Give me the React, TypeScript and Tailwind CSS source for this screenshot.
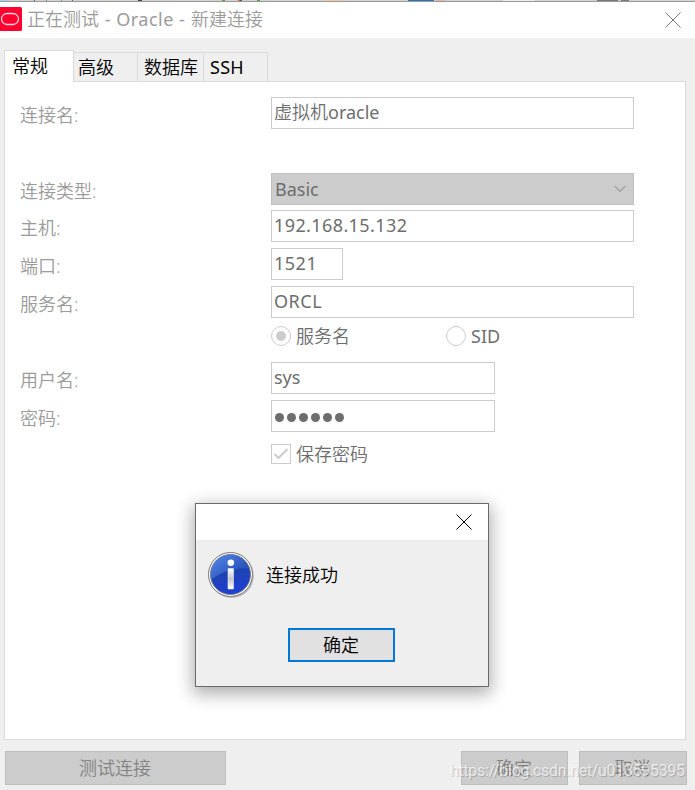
import React from 'react';
import clsx from 'clsx';

const tabs = [
  { name: '常规', width: 'w-[70px]', active: true },
  { name: '高级', width: 'w-[64px]' },
  { name: '数据库', width: 'w-[66px]' },
  { name: 'SSH', width: 'w-[64px]' },
];

// Sliver of the window behind, visible above the title bar
const backdrop = [
  { left: 0, width: 9, color: '#a9cde8' },
  { left: 34, width: 1, color: '#2f6fa3' },
  { left: 46, width: 1, color: '#4f94c8' },
  { left: 61, width: 1, color: '#4f94c8' },
  { left: 72, width: 1, color: '#2f6fa3' },
  { left: 138, width: 4, color: '#444444' },
  { left: 222, width: 3, color: '#5d9f3d' },
  { left: 238, width: 2, color: '#e06048' },
  { left: 240, width: 2, color: '#555555' },
  { left: 257, width: 3, color: '#5d9f3d' },
  { left: 324, width: 20, color: '#eec9aa' },
  { left: 408, width: 26, color: '#2d75b0' },
  { left: 436, width: 9, color: '#e8b5a5' },
  { left: 503, width: 32, color: '#eeeeee' },
  { left: 597, width: 21, color: '#777777' },
  { left: 621, width: 8, color: '#777777' },
];

function CloseIcon() {
  return (
    <svg width="16" height="16" viewBox="0 0 16 16" fill="none" stroke="currentColor" strokeWidth="1">
      <path d="M.5 .5l15 15M15.5 .5l-15 15" />
    </svg>
  );
}

function InfoIcon() {
  return (
    <svg width="48" height="48" viewBox="0 0 48 48">
      <defs>
        <linearGradient id="disc" x1="0" y1="0" x2="0.3" y2="1">
          <stop offset="0" stopColor="#4f7fe0" />
          <stop offset="0.5" stopColor="#1d43ae" />
          <stop offset="1" stopColor="#1f3fd0" />
        </linearGradient>
        <linearGradient id="gloss" x1="0" y1="0" x2="1" y2="0.5">
          <stop offset="0" stopColor="#5f92ee" />
          <stop offset="1" stopColor="#2b58c0" />
        </linearGradient>
        <linearGradient id="stem" x1="0" y1="0" x2="0" y2="1">
          <stop offset="0" stopColor="#fff" />
          <stop offset="0.5" stopColor="#c4c6cc" />
          <stop offset="1" stopColor="#fff" />
        </linearGradient>
      </defs>
      <circle cx="23.8" cy="24" r="22" fill="#999" opacity="0.6" />
      <circle cx="22.5" cy="22.5" r="22" fill="#fff" stroke="#777" />
      <circle cx="22.5" cy="22.5" r="20" fill="url(#disc)" stroke="#777c88" />
      <path d="M3.500 27.500a19.400 19.400 0 0 1 37.500 -11C31 15 13.500 19 3.500 27.500z" fill="url(#gloss)" opacity="0.65" />
      <circle cx="22.800" cy="10.700" r="3.300" fill="#fff" />
      <rect x="20" y="16.500" width="5.500" height="20.500" rx="0.500" fill="url(#stem)" stroke="#fff" strokeWidth="0.500" />
    </svg>
  );
}

function Row({ label, className = 'h-[38px]', children }: { label?: string; className?: string; children: React.ReactNode }) {
  return (
    <div className={clsx('flex items-start pl-[15px]', className)}>
      <div className="w-[251px] shrink-0 h-8 leading-8 pt-[2px] text-[#9a9a9a]">{label}</div>
      {children}
    </div>
  );
}

function Field({ className = 'w-[363px]', children }: { className?: string; children: React.ReactNode }) {
  return (
    <div className={clsx('h-8 shrink-0 border border-[#cbcbcb] bg-white pl-[2px] leading-[28px] font-normal text-[#6d6d6d]', className)}>
      {children}
    </div>
  );
}

function Button({ className, children }: { className?: string; children: React.ReactNode }) {
  return (
    <button className={clsx('h-[34px] shrink-0 border border-[#bfbfbf] bg-[#cccccc] pr-px leading-8 text-[#838383]', className)}>
      {children}
    </button>
  );
}

export default function App() {
  return (
    <div className="relative flex h-[790px] w-[695px] flex-col overflow-hidden bg-[#efefef] font-['Noto_Sans','Noto_Sans_CJK_SC',sans-serif] text-[18px] font-[350] whitespace-nowrap">
      <div className="relative h-[2px] shrink-0 border-b border-[#9a9a9a] bg-[#d2d2d2]">
        {backdrop.map((b) => (
          <span key={b.left} className="absolute top-0 h-px" style={{ left: b.left, width: b.width, background: b.color }} />
        ))}
      </div>

      <header className="flex h-9 shrink-0 items-center bg-white text-[#9b9b9b]">
        <svg className="-mt-[2px]" width="22" height="24" viewBox="0 0 22 24">
          <path d="M0 0h20.500a1.500 1.500 0 0 1 1.500 1.500v21a1.500 1.500 0 0 1-1.500 1.500H0z" fill="#ff0031" />
          <rect x="1.500" y="6.500" width="17" height="11" rx="5.500" fill="none" stroke="#ffd5dc" strokeWidth="1.300" />
        </svg>
        <h1 className="-mt-[2px] ml-[5px]">
          正在测试 <span className="mx-px font-normal tracking-[0.500px]">- Oracle -</span> 新建连接
        </h1>
        <span className="mr-[14px] ml-auto text-[#777777]">
          <CloseIcon />
        </span>
      </header>

      <nav className="mt-3 ml-1 flex h-8 shrink-0 items-end text-black">
        {tabs.map((tab) => (
          <div
            key={tab.name}
            className={clsx(
              'shrink-0 border-[#dadada]',
              tab.width,
              tab.active
                ? 'z-10 h-8 border border-b-0 bg-white pl-[7px] leading-[30px]'
                : 'h-[30px] border-t border-r border-b leading-[29px]',
              tab.name === '高级' && 'pl-1',
              tab.name === '数据库' && 'pl-[6px]',
              tab.name === 'SSH' && 'pl-[6px] font-normal tracking-[0.300px]'
            )}
          >
            {tab.name}
          </div>
        ))}
      </nav>

      <main className="-mt-px ml-1 h-[659px] w-[682px] shrink-0 border border-[#dadada] bg-white pt-[15px]">
        <Row label="连接名:" className="h-[76px]">
          <Field><span className="font-[350]">虚拟机</span>oracle</Field>
        </Row>
        <Row label="连接类型:" className="h-[37px]">
          <div className="flex h-8 w-[363px] shrink-0 items-center justify-between border border-[#bfbfbf] bg-[#cccccc] pr-[7px] pl-[3px] font-normal text-[#6d6d6d]">
            Basic
            <svg width="12" height="8" viewBox="0 0 12 8" fill="none" stroke="#a3a3a3" strokeWidth="1.300">
              <path d="M.7 1l5.300 5.300L11.300 1" />
            </svg>
          </div>
        </Row>
        <Row label="主机:">
          <Field><span className="tracking-[0.400px]">192.168.15.132</span></Field>
        </Row>
        <Row label="端口:">
          <Field className="w-[72px]"><span className="tracking-[0.500px]">1521</span></Field>
        </Row>
        <Row label="服务名:">
          <Field><span className="tracking-[0.500px]">ORCL</span></Field>
        </Row>
        <Row>
          <div className="flex h-6 items-center text-[#6d6d6d]">
            <span className="mr-[5px] flex size-5 items-center justify-center rounded-full border border-[#cccccc]">
              <span className="size-[10px] rounded-full bg-[#cccccc]" />
            </span>
            <span className="w-[150px]">服务名</span>
            <span className="mr-[5px] size-5 rounded-full border border-[#cccccc]" />
            <span className="font-normal">SID</span>
          </div>
        </Row>
        <Row label="用户名:">
          <Field className="w-[224px]">sys</Field>
        </Row>
        <Row label="密码:">
          <Field className="w-[224px]">
            <span className="flex h-full items-center gap-[3px] pt-[3px] pl-px">
              {[0, 1, 2, 3, 4, 5].map((i) => (
                <span key={i} className="size-[9px] rounded-full bg-[#6d6d6d]" />
              ))}
            </span>
          </Field>
        </Row>
        <Row>
          <div className="flex h-8 items-center text-[#6d6d6d]">
            <span className="mr-[5px] flex size-5 items-center justify-center border border-[#cccccc]">
              <svg width="16" height="16" viewBox="0 0 16 16" fill="none" stroke="#cccccc" strokeWidth="2">
                <path d="M1.500 8l4 4L14.500 3" />
              </svg>
            </span>
            保存密码
          </div>
        </Row>
      </main>

      <footer className="mt-[11px] flex shrink-0 pl-[5px]">
        <Button className="w-[221px]">测试连接</Button>
        <Button className="ml-[235px] w-[107px]">确定</Button>
        <Button className="ml-[11px] w-[108px]">取消</Button>
      </footer>

      {/* Result dialog */}
      <div className="absolute top-[503px] left-[195px] z-20 flex h-[184px] w-[294px] flex-col border border-[#6a6a6a] bg-[#efefef] text-black shadow-[0_5px_16px_2px_rgba(0,0,0,0.32)]">
        <div className="flex h-9 shrink-0 items-center justify-end bg-white pr-[16px]">
          <CloseIcon />
        </div>
        <div className="mt-3 flex h-12 items-center pl-3">
          <InfoIcon />
          <span className="-mt-[2px] ml-[10px]">连接成功</span>
        </div>
        <button className="mt-7 ml-[92px] h-[34px] w-[107px] border-2 border-[#0078d7] bg-[#e1e1e1] pr-px leading-[30px]">确定</button>
      </div>

      <div className="absolute top-[760px] left-[450px] z-30 font-[Roboto] text-[16px] leading-[22px] font-normal tracking-[-0.310px] text-white/70 [text-shadow:1px_1px_1px_rgba(0,0,0,0.2)]">
        https://blog.csdn.net/u013595395
      </div>
    </div>
  );
}
